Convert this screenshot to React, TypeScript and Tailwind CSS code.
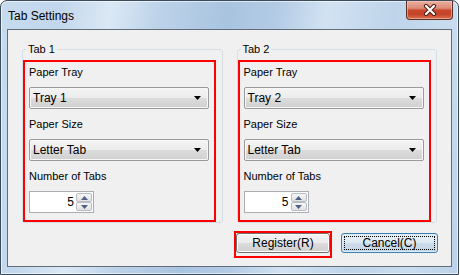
import React from 'react'

const Combo = ({ value }: { value: string }) => (
    <div className="flex h-[22px] w-[180px] items-center justify-between rounded-[2px] border border-[#9a9a9a] bg-[linear-gradient(to_bottom,#f4f4f4_0%,#ececec_48%,#dcdcdc_52%,#d0d0d0_100%)] pl-[3px] pr-[7px] shadow-[inset_0_0_0_1px_#f7f7f7]">
        <span className="text-[12px]">{value}</span>
        <svg width="7" height="4" viewBox="0 0 7 4">
            <path d="M0 0H7L3.5 4Z" fill="#000" />
        </svg>
    </div>
)

const SpinArrow = ({ up }: { up?: boolean }) => (
    <div className="flex flex-1 items-center justify-center rounded-[2px] border border-[#b8bcc4] bg-[linear-gradient(to_bottom,#f6f6f6,#e1e1e1)]">
        <svg width="7" height="4" viewBox="0 0 7 4">
            <path d={up ? 'M0 4H7L3.5 0Z' : 'M0 0H7L3.5 4Z'} fill="#4d6185" />
        </svg>
    </div>
)

const Spin = ({ value }: { value: number }) => (
    <div className="flex h-[22px] w-[65px] border border-[#abadb3] bg-white">
        <div className="flex flex-1 items-center justify-end pr-[2px] text-[12px]">{value}</div>
        <div className="flex w-[17px] flex-col py-[1px] pr-[1px]">
            <SpinArrow up />
            <SpinArrow />
        </div>
    </div>
)

const TabGroup = ({ title, tray }: { title: string; tray: string }) => (
    <fieldset className="h-[180px] w-[201px] rounded-[3px] border border-[#d5dfe5]">
        <legend className="ml-[3px] px-[2px] leading-[13px]">{title}</legend>
        <div className="mt-[4px] flex h-[162px] w-[193px] flex-col border-2 border-[#ff0000] pl-[4px] pt-[2px]">
            <p className="leading-[16px]">Paper Tray</p>
            <div className="mt-[7px]">
                <Combo value={tray} />
            </div>
            <p className="mt-[7px] leading-[16px]">Paper Size</p>
            <div className="mt-[7px]">
                <Combo value="Letter Tab" />
            </div>
            <p className="mt-[7px] leading-[16px]">Number of Tabs</p>
            <div className="mt-[7px]">
                <Spin value={5} />
            </div>
        </div>
    </fieldset>
)

const App = () => {
    return (
        <div className="h-[275px] w-[460px] bg-white font-['Liberation_Sans',Arial,sans-serif] text-[11px] text-black">
            <div className="flex h-[275px] w-[459px] flex-col rounded-t-[7px] border border-[#3c4b5b] bg-[linear-gradient(100deg,#c7dbef_0%,#c2d7ec_12%,#dbe8f5_22%,#bcd2e9_32%,#a9c4e0_45%,#b3cbe5_55%,#d2e2f2_65%,#bfd4ea_78%,#c9dcef_90%,#bcd2e9_100%)] shadow-[inset_0_0_0_1px_rgba(255,255,255,0.6)]">
                <div className="flex h-[28px] items-start justify-between pl-[7px] pr-[5px]">
                    <span className="mt-[7px] text-[12px] leading-[16px]">Tab Settings</span>
                    <button className="flex h-[19px] w-[47px] items-center justify-center rounded-b-[4px] border border-t-0 border-[#5a3129] bg-[linear-gradient(to_bottom,#eab0a1_0%,#dd8a75_40%,#c9472c_52%,#c4452a_75%,#dd7150_100%)] shadow-[inset_0_0_0_1px_rgba(255,210,200,0.5)]">
                        <svg width="14" height="12" viewBox="0 0 14 12">
                            <path d="M3 2L11 10M11 2L3 10" stroke="#4a2018" strokeWidth="4.2" strokeLinecap="round" />
                            <path d="M3 2L11 10M11 2L3 10" stroke="#ffffff" strokeWidth="2.2" strokeLinecap="round" />
                        </svg>
                    </button>
                </div>
                <div className="mx-[6px] flex h-[238px] flex-col border border-[#5f6d7c] bg-[#f0f0f0]">
                    <div className="mt-[13px] flex gap-[14px] px-[14px]">
                        <TabGroup title="Tab 1" tray="Tray 1" />
                        <TabGroup title="Tab 2" tray="Tray 2" />
                    </div>
                    <div className="mt-[8px] flex items-start justify-end gap-[9px] pr-[13px]">
                        <div className="h-[27px] w-[98px] border-2 border-[#ff0000]">
                            <button className="flex h-[20px] w-full items-center justify-center rounded-[3px] border border-[#707070] bg-[linear-gradient(to_bottom,#f2f2f2_0%,#ebebeb_48%,#dddddd_52%,#cfcfcf_100%)] text-[12px] shadow-[inset_0_0_0_1px_#fcfcfc]">
                                Register(R)
                            </button>
                        </div>
                        <button className="mt-[2px] h-[20px] w-[97px] rounded-[3px] border border-[#3c7fb1] bg-[linear-gradient(to_bottom,#e9f1f7_0%,#dde9f2_48%,#cddcea_52%,#c3d5e5_100%)] p-[2px] text-[12px] shadow-[inset_0_0_0_1px_#d8ecf8]">
                            <span className="flex h-full w-full items-center justify-center border border-dotted border-black">
                                Cancel(C)
                            </span>
                        </button>
                    </div>
                </div>
            </div>
        </div>
    )
}

export default App
